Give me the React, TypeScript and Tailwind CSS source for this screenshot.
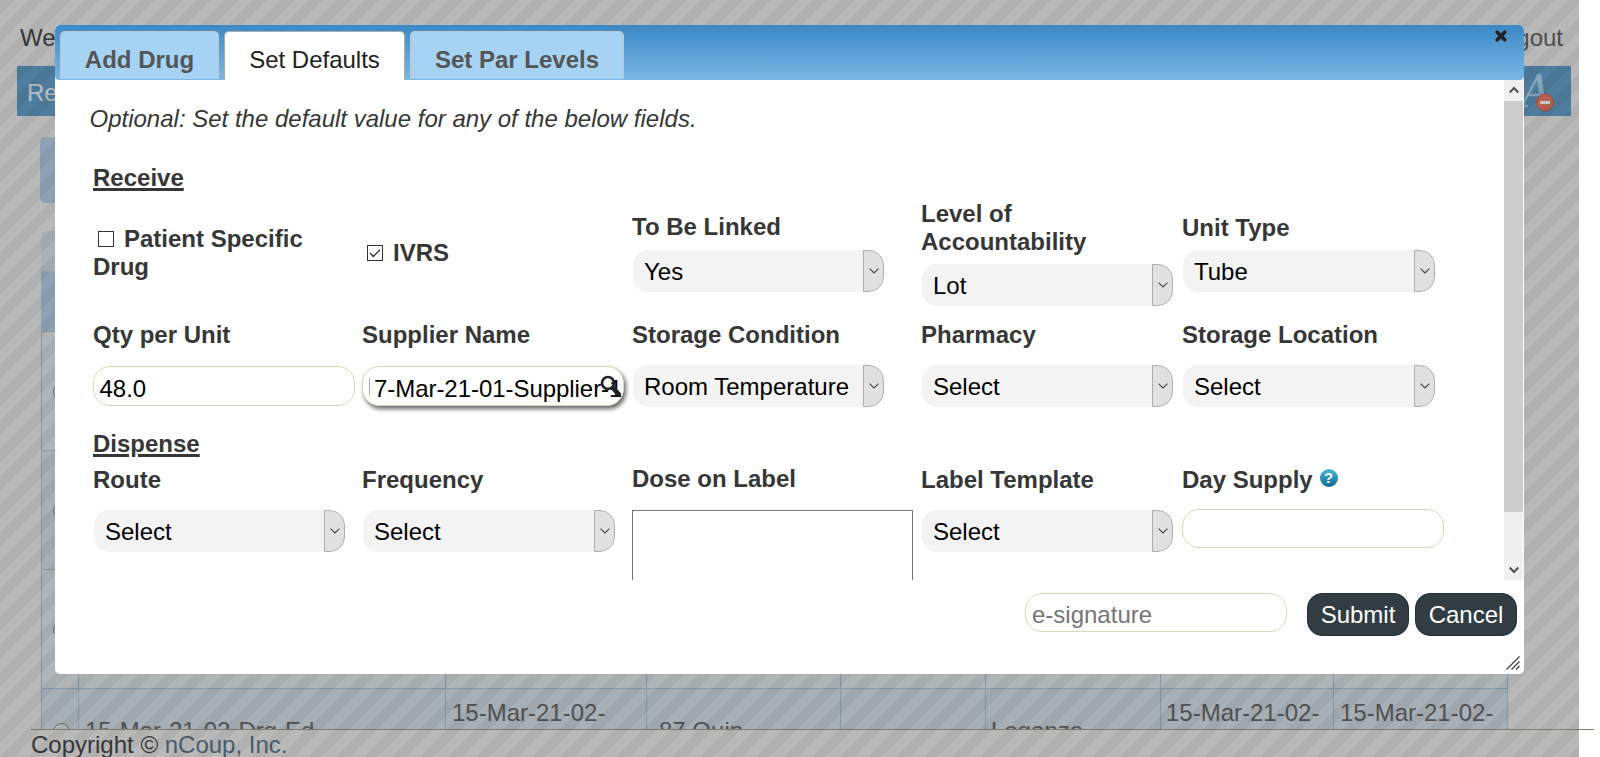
import React from "react";

function Chevron() {
  return (
    <svg width="10" height="6" viewBox="0 0 10 6" fill="none" stroke="#444" strokeWidth="1.1" className="-mt-px">
      <path d="M0.6 0.6 L5 5 L9.4 0.6" />
    </svg>
  );
}

function Select({ value, width = "w-[251px]" }: { value: string; width?: string }) {
  return (
    <div className={"ml-px flex h-[42px] items-stretch overflow-hidden rounded-[15px] bg-[#f3f3f3] text-black " + width}>
      <div className="flex-1 whitespace-nowrap pl-[11px] pt-[8px] leading-[28px]">{value}</div>
      <div className="flex w-[21px] items-center justify-center rounded-r-[15px] border border-[#adadad] bg-[#e1e1e1]">
        <Chevron />
      </div>
    </div>
  );
}

function Label({ children }: { children: React.ReactNode }) {
  return <div className="font-bold leading-[28px]">{children}</div>;
}

function Tab({ label, active = false, width }: { label: string; active?: boolean; width: string }) {
  return (
    <div
      className={
        "flex justify-center rounded-t-[5px] border border-b-0 pt-[14px] leading-[28px] " +
        (active
          ? "h-[49px] border-[#aaaaaa] bg-white text-[#212121] "
          : "h-[48px] border-[#c5c5c5] bg-[#a6d2f4] font-bold text-[#555] ") +
        width
      }
    >
      {label}
    </div>
  );
}

function Checkbox({ checked = false }: { checked?: boolean }) {
  return (
    <svg width="16" height="16" viewBox="0 0 16 16" fill="none" stroke="#333" className="inline-block align-[0px]">
      <rect x="0.5" y="0.5" width="15" height="15" fill="#fff" />
      {checked && <path d="M3 8 L6.3 11.5 L13 4.7" strokeWidth="1.3" />}
    </svg>
  );
}

const columns = "grid-cols-[36px_367px_201px_194px_145px_175px_173px_175px]";
const cell = "border-l border-[#8199ab]";

function TableRow({ tone, height }: { tone: string; height: string }) {
  return (
    <div className={"grid border-t border-[#8199ab] " + columns + " " + tone + " " + height}>
      <div className="pl-[11px] pt-[51px]">
        <div className="size-[17px] rounded-full border border-[#666] bg-[#b5b8ba]" />
      </div>
      {[0, 1, 2, 3, 4, 5, 6].map((i) => (
        <div key={i} className={cell} />
      ))}
    </div>
  );
}

function Page() {
  return (
    <div className="flex h-[729px] w-[1579px] flex-col overflow-hidden bg-[#b9b9b9]">
      <div className="flex h-[66px] shrink-0 justify-between pl-[20px] pr-[16px] pt-[24px] leading-[28px]">
        <span className="text-[#383838]">We</span>
        <span className="text-[#4f4f4f]">gout</span>
      </div>
      <div className="ml-[17px] flex h-[50px] w-[1554px] shrink-0 items-start justify-between bg-[#4f7d9f] pl-[10px] pr-[17px] pt-[13px] leading-[28px] text-[#bfc2c4]">
        <span>Re</span>
        <svg width="34" height="40" viewBox="0 0 34 40" className="-mt-[5px]">
          <g fill="none" stroke="#86a7bf" strokeLinecap="round">
            <path d="M2 32 L18 2" strokeWidth="2.200" />
            <path d="M19 2 L23 30" strokeWidth="5" />
            <path d="M8 21 L21 21" strokeWidth="2.400" />
            <path d="M0 32 L7 32" strokeWidth="2.400" />
          </g>
          <circle cx="25" cy="28.500" r="8.500" fill="#b8604f" stroke="#a0483c" />
          <rect x="20" y="27" width="10" height="3" fill="#c6c6c6" />
        </svg>
      </div>
      <div className="ml-[40px] mt-[21px] h-[66px] w-[1468px] shrink-0 rounded-[5px] bg-[#8da3b5]" />
      <div className="ml-[41px] mt-[28px] w-[1467px] shrink-0">
        <div className="h-[40px] rounded-t-[5px] bg-[#abb2b7]" />
        <div className="h-[60px] bg-[#8da3b5]" />
        <div className="border-l border-r border-[#8199ab]">
          <TableRow tone="bg-[#b0b5b8]" height="h-[119px]" />
          <TableRow tone="bg-[#a7afb7]" height="h-[119px]" />
          <TableRow tone="bg-[#b0b5b8]" height="h-[119px]" />
          <div className={"grid h-[119px] border-t border-[#8199ab] bg-[#a7afb7] leading-[28px] text-[#525252] " + columns}>
            <div className="pl-[11px] pt-[34px]">
              <div className="size-[17px] rounded-full border border-[#666] bg-[#b5b8ba]" />
            </div>
            <div className={cell + " pl-[6px] pt-[28px]"}>15-Mar-21-02-Drg-Ed</div>
            <div className={cell + " pl-[6px] pt-[10px]"}>15-Mar-21-02-</div>
            <div className={cell + " pl-[12px] pt-[28px]"}>87 Quin</div>
            <div className={cell} />
            <div className={cell + " pl-[5px] pt-[28px]"}>Loganzo</div>
            <div className={cell + " pl-[5px] pt-[10px]"}>15-Mar-21-02-</div>
            <div className={cell + " pl-[6px] pt-[10px]"}>15-Mar-21-02-</div>
          </div>
        </div>
      </div>
    </div>
  );
}

function HelpIcon() {
  return (
    <span className="flex size-[18px] items-center justify-center rounded-full bg-linear-to-b from-[#45b8dc] to-[#0d6a92] text-[15px] font-bold leading-[18px] text-white">
      ?
    </span>
  );
}

const field = "w-[262px] rounded-[17px] border border-[#d9d9b8] bg-white";
const formGrid = "grid grid-cols-[269px_270px_289px_261px_263px]";

function Dialog() {
  return (
    <div className="absolute left-[55px] top-[25px] flex h-[649px] w-[1469px] flex-col overflow-hidden rounded-[5px] bg-white">
      <div className="flex h-[55px] shrink-0 items-start rounded-[5px] rounded-b-[4px] bg-linear-to-b from-[#3b89c7] to-[#79b7e4] pl-[5px] pt-[6px]">
        <Tab label="Add Drug" width="w-[159px]" />
        <div className="w-[5px]" />
        <Tab label="Set Defaults" active width="w-[181px]" />
        <div className="w-[5px]" />
        <Tab label="Set Par Levels" width="w-[214px]" />
        <svg width="14" height="14" viewBox="0 0 14 14" className="ml-auto mr-[16px] -mt-[2px]">
          <path d="M3.200 3.200 L10.800 10.800 M10.800 3.200 L3.200 10.800" stroke="#222" strokeWidth="3.700" strokeLinecap="round" />
        </svg>
      </div>

      <div className="flex h-[500px] shrink-0 overflow-hidden">
        <div className="flex-1 overflow-hidden pl-[38px] text-[#363636]">
          <div className="-ml-[3.5px] pt-[25px] italic leading-[28px]">
            Optional: Set the default value for any of the below fields.
          </div>
          <div className="mt-[31px] font-bold leading-[28px] underline decoration-[3px] underline-offset-[2px]">Receive</div>

          <div className={formGrid + " h-[129px]"}>
            <div className="pt-[33px] font-bold leading-[28px]">
              <span className="ml-[5px] inline-block w-[26px]"><Checkbox /></span>Patient Specific
              <br />
              Drug
            </div>
            <div className="pt-[47px] font-bold leading-[28px]">
              <span className="ml-[5px] inline-block w-[26px]"><Checkbox checked /></span>IVRS
            </div>
            <div className="flex flex-col gap-[9px] pt-[21px]">
              <Label>To Be Linked</Label>
              <Select value="Yes" />
            </div>
            <div className="flex flex-col gap-[8px] pt-[8px]">
              <Label>Level of<br />Accountability</Label>
              <Select value="Lot" />
            </div>
            <div className="flex flex-col gap-[8px] pt-[22px]">
              <Label>Unit Type</Label>
              <Select value="Tube" width="w-[252px]" />
            </div>
          </div>

          <div className={formGrid + " h-[109px]"}>
            <div className="flex flex-col gap-[17px]">
              <Label>Qty per Unit</Label>
              <div className={field + " h-[40px] pl-[5.5px] pt-[8px] leading-[28px] text-black"}>48.0</div>
            </div>
            <div className="flex flex-col gap-[17px]">
              <Label>Supplier Name</Label>
              <div className={field + " flex h-[40px] items-center overflow-hidden pl-[6px] shadow-[2px_3px_4px_rgba(0,0,0,0.6)]"}>
                <div className="h-[17px] w-px shrink-0 bg-[#aaa]" />
                <div className="w-[250px] shrink-0 whitespace-nowrap pl-[4px] pt-[5px] leading-[28px] tracking-[-0.05px] text-black">
                  7-Mar-21-01-Supplier-1
                </div>
                <svg width="22" height="22" viewBox="0 0 22 22" className="-ml-[20px] shrink-0" fill="none" stroke="#222">
                  <circle cx="8" cy="8" r="6" strokeWidth="2.600" />
                  <path d="M13 13 L18.500 19" strokeWidth="4.800" strokeLinecap="round" />
                </svg>
              </div>
            </div>
            <div className="flex flex-col gap-[16px]">
              <Label>Storage Condition</Label>
              <Select value="Room Temperature" />
            </div>
            <div className="flex flex-col gap-[16px]">
              <Label>Pharmacy</Label>
              <Select value="Select" />
            </div>
            <div className="flex flex-col gap-[16px]">
              <Label>Storage Location</Label>
              <Select value="Select" width="w-[252px]" />
            </div>
          </div>

          <div className="font-bold leading-[28px] underline decoration-[3px] underline-offset-[2px]">Dispense</div>
          <div className={formGrid + " pt-[8px]"}>
            <div className="flex flex-col gap-[16px]">
              <Label>Route</Label>
              <Select value="Select" />
            </div>
            <div className="flex flex-col gap-[16px]">
              <Label>Frequency</Label>
              <Select value="Select" width="w-[252px]" />
            </div>
            <div className="-mt-px flex flex-col gap-[17px]">
              <Label>Dose on Label</Label>
              <div className="h-[100px] w-[281px] border border-[#767676] bg-white" />
            </div>
            <div className="flex flex-col gap-[16px]">
              <Label>Label Template</Label>
              <Select value="Select" />
            </div>
            <div className="flex flex-col gap-[15px]">
              <div className="flex items-start gap-[7px]">
                <Label>Day Supply</Label>
                <div className="pt-[3px]"><HelpIcon /></div>
              </div>
              <div className={field + " h-[39px]"} />
            </div>
          </div>
        </div>

        <div className="mr-px flex w-[19px] flex-col bg-[#f0f0f0]">
          <div className="flex h-[21px] items-center justify-center">
            <svg width="10" height="8" viewBox="0 0 10 8" fill="none" stroke="#505050" strokeWidth="2" className="-mt-px">
              <path d="M0.700 6.500 L5 2 L9.300 6.500" />
            </svg>
          </div>
          <div className="h-[411px] bg-[#cdcdcd]" />
          <div className="flex flex-1 items-end justify-center pb-[6px]">
            <svg width="10" height="8" viewBox="0 0 10 8" fill="none" stroke="#505050" strokeWidth="2">
              <path d="M0.700 1.500 L5 6 L9.300 1.500" />
            </svg>
          </div>
        </div>
      </div>

      <div className="flex items-start justify-end pr-[7px] pt-[13px] leading-[28px]">
        <div className={field + " mr-[20px] h-[39px] pl-[6px] pt-[7px] text-[#757575]"}>e-signature</div>
        <div className="mr-[6px] flex h-[43px] w-[102px] justify-center rounded-[15px] border border-[#22303a] bg-[#323c43] pt-[7px] text-white">Submit</div>
        <div className="flex h-[43px] w-[102px] justify-center rounded-[15px] border border-[#22303a] bg-[#323c43] pt-[7px] text-white">Cancel</div>
      </div>
      <svg width="14" height="14" viewBox="0 0 14 14" className="ml-auto mr-[4px] mt-[20px] shrink-0" stroke="#444" strokeWidth="1.400">
        <path d="M0.500 13.500 L13.500 0.500 M5.500 13.500 L13.500 5.500 M10 13.500 L13.500 10" />
      </svg>
    </div>
  );
}

export default function App() {
  return (
    <div className="relative h-[757px] w-[1600px] overflow-hidden bg-white font-['Liberation_Sans',Arial,sans-serif] text-[24px]">
      <Page />
      <div className="flex h-[28px] bg-[linear-gradient(to_right,#b9b9b9_1579px,white_1579px)] pl-[31px]">
        <div className="w-[1563px] border-t border-[#7d7f6a] pt-px leading-[28px] text-[#383838]">
          Copyright © <span className="text-[#4a5d6c]">nCoup, Inc.</span>
        </div>
      </div>
      <div className="absolute left-0 top-0 h-[757px] w-[1579px] bg-[linear-gradient(135deg,rgba(0,0,0,0.05)_25%,transparent_25%,transparent_50%,rgba(0,0,0,0.05)_50%,rgba(0,0,0,0.05)_75%,transparent_75%)] bg-[length:28px_28px]" />
      <Dialog />
    </div>
  );
}
